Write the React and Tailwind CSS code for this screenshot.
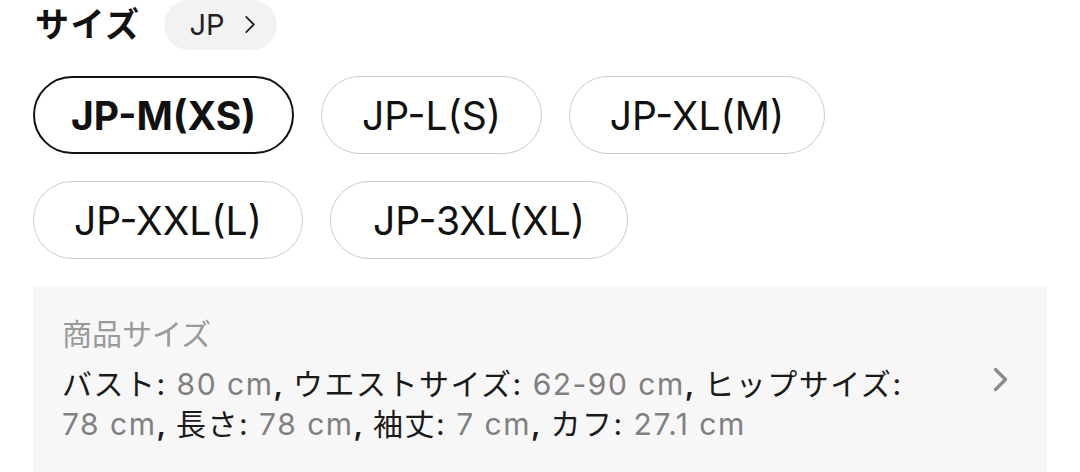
import React from "react";

const font = { fontFamily: 'Inter, "Noto Sans CJK JP", sans-serif' };

function Chevron({ className, strokeWidth = 2 }) {
  return (
    <svg viewBox="0 0 12 20" fill="none" className={className}>
      <path d="M2 2 L10 10 L2 18" stroke="currentColor" strokeWidth={strokeWidth} strokeLinecap="round" strokeLinejoin="round" />
    </svg>
  );
}

const rows = [
  [
    { label: "JP-M(XS)", w: "w-[261px]", selected: true },
    { label: "JP-L(S)", w: "w-[221px]" },
    { label: "JP-XL(M)", w: "w-[256px]" },
  ],
  [
    { label: "JP-XXL(L)", w: "w-[270px]" },
    { label: "JP-3XL(XL)", w: "w-[298px]" },
  ],
];

const specs = [
  ["バスト", "80 cm"],
  ["ウエストサイズ", "62-90 cm"],
  ["ヒップサイズ", "78 cm"],
  ["長さ", "78 cm"],
  ["袖丈", "7 cm"],
  ["カフ", "27.1 cm"],
];

export default function App() {
  return (
    <div className="w-[1080px] h-[472px] overflow-hidden bg-white px-[33px]" style={font}>
      <div className="flex items-center h-[49px]">
        <span className="ml-[2px] text-[34px] font-bold text-[#111] leading-none tracking-[1.5px]">サイズ</span>
        <div className="ml-[24px] flex items-center h-[50px] rounded-full bg-[#f2f2f2] pl-[25px] pr-[21px]">
          <span className="text-[29px] text-[#222] leading-none">JP</span>
          <Chevron className="ml-[19px] w-[12px] h-[19px] text-[#222]" strokeWidth={1.9} />
        </div>
      </div>

      <div className="mt-[27px] flex flex-col gap-[27px]">
        {rows.map((row, i) => (
          <div key={i} className="flex gap-[27px]">
            {row.map((b) => (
              <button
                key={b.label}
                className={
                  "h-[78px] rounded-full flex items-center justify-center text-[39px] leading-none text-[#111] " +
                  b.w +
                  (b.selected
                    ? " border-[2.5px] border-[#111] font-bold"
                    : " border-[1.5px] border-[#cccccc] font-normal")
                }
              >
                {b.label}
              </button>
            ))}
          </div>
        ))}
      </div>

      <div className="mt-[27px] bg-[#f7f7f7] flex items-center pl-[29px] pr-[39px] pt-[28px] pb-[28px]">
        <div className="flex-1">
          <div className="text-[30px] leading-[40px] text-[#9a9a9a]">商品サイズ</div>
          <p className="mt-[10px] max-w-[862px] break-keep text-[30px] leading-[40px] tracking-[1.5px] text-[#1a1a1a]">
            {specs.map(([k, v], i) => (
              <React.Fragment key={k}>
                {k}: <span className="text-[#808080]">{v}</span>
                {i < specs.length - 1 ? <span className="font-semibold">, </span> : null}
              </React.Fragment>
            ))}
          </p>
        </div>
        <Chevron className="w-[15px] h-[25px] text-[#8a8a8a]" strokeWidth={2.6} />
      </div>
    </div>
  );
}
